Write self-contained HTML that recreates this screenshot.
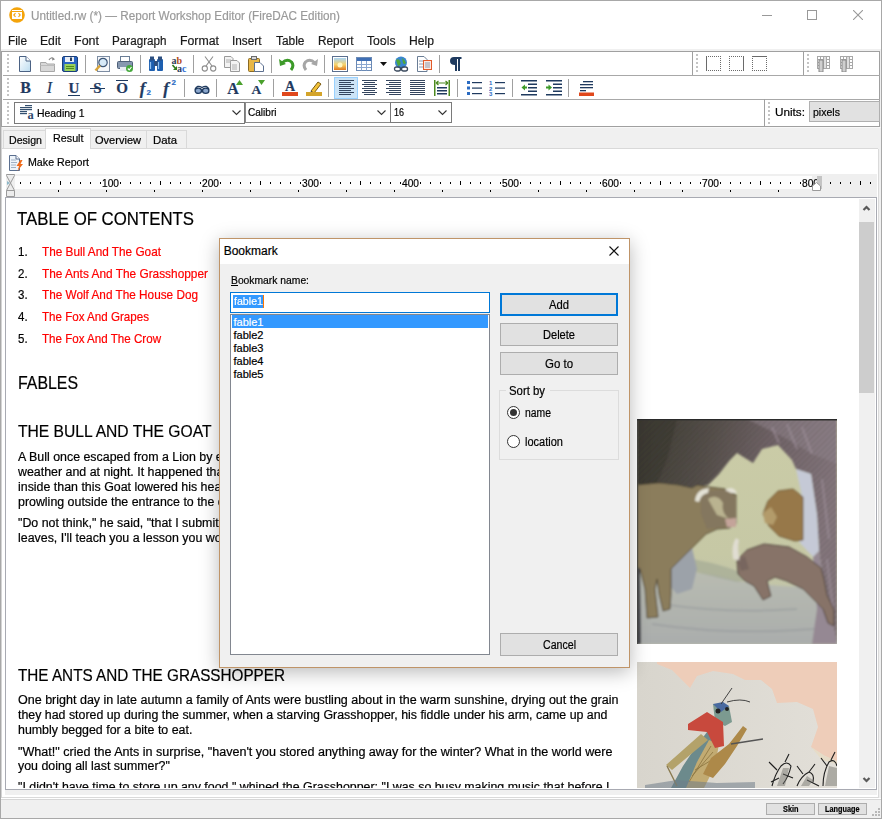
<!DOCTYPE html>
<html><head><meta charset="utf-8"><style>
html,body{margin:0;padding:0;width:882px;height:819px;overflow:hidden;background:#f0f0f0;}
body{position:relative;font-family:"Liberation Sans",sans-serif;}
div,span,svg{position:absolute;box-sizing:border-box;}
span{white-space:nowrap;-webkit-text-stroke:0.2px currentColor;}
</style></head><body>
<div style="left:0px;top:0px;width:882px;height:819px;background:#f0f0f0;"></div>
<div style="left:0px;top:0px;width:882px;height:51px;background:#fff;"></div>
<div style="left:0px;top:0px;width:882px;height:1px;background:#a8a8a8;"></div>
<div style="left:0px;top:0px;width:1px;height:819px;background:#a8a8a8;"></div>
<div style="left:881px;top:0px;width:1px;height:819px;background:#a8a8a8;"></div>
<svg style="left:9px;top:7px;" width="16" height="16" viewBox="0 0 16 16"><circle cx="8" cy="8" r="7.8" fill="#f4a40b"/><rect x="3" y="3" width="10" height="9" fill="#fff"/><rect x="3" y="4" width="10" height="1" fill="#f4a40b"/><path d="M6.5 6.2 L4.8 8 L6.5 9.8 M9.5 6.2 L11.2 8 L9.5 9.8" stroke="#f4a40b" stroke-width="1.1" fill="none"/></svg>
<span style="left:30.50px;top:9.84px;font-size:12px;line-height:12px;color:#9a9a9a;font-weight:normal;font-family:'Liberation Sans',sans-serif;transform:scaleX(0.9762);transform-origin:0 0;">Untitled.rw (*) — Report Workshop Editor (FireDAC Edition)</span>
<div style="left:762px;top:15px;width:10px;height:1px;background:#999;"></div>
<div style="left:807px;top:10px;width:10px;height:10px;border:1px solid #999;"></div>
<svg style="left:853px;top:10px;" width="10" height="10" viewBox="0 0 10 10"><path d="M0 0 L10 10 M10 0 L0 10" stroke="#999" stroke-width="1.1"/></svg>
<span style="left:8.00px;top:34.84px;font-size:12px;line-height:12px;color:#1a1a1a;font-weight:normal;font-family:'Liberation Sans',sans-serif;transform:scaleX(0.9822);transform-origin:0 0;">File</span>
<span style="left:39.50px;top:34.84px;font-size:12px;line-height:12px;color:#1a1a1a;font-weight:normal;font-family:'Liberation Sans',sans-serif;transform:scaleX(1.0151);transform-origin:0 0;">Edit</span>
<span style="left:73.50px;top:34.84px;font-size:12px;line-height:12px;color:#1a1a1a;font-weight:normal;font-family:'Liberation Sans',sans-serif;transform:scaleX(1.0410);transform-origin:0 0;">Font</span>
<span style="left:111.80px;top:34.84px;font-size:12px;line-height:12px;color:#1a1a1a;font-weight:normal;font-family:'Liberation Sans',sans-serif;transform:scaleX(0.9724);transform-origin:0 0;">Paragraph</span>
<span style="left:180.00px;top:34.84px;font-size:12px;line-height:12px;color:#1a1a1a;font-weight:normal;font-family:'Liberation Sans',sans-serif;transform:scaleX(1.0259);transform-origin:0 0;">Format</span>
<span style="left:232.00px;top:34.84px;font-size:12px;line-height:12px;color:#1a1a1a;font-weight:normal;font-family:'Liberation Sans',sans-serif;transform:scaleX(0.9828);transform-origin:0 0;">Insert</span>
<span style="left:275.50px;top:34.84px;font-size:12px;line-height:12px;color:#1a1a1a;font-weight:normal;font-family:'Liberation Sans',sans-serif;transform:scaleX(0.9935);transform-origin:0 0;">Table</span>
<span style="left:317.50px;top:34.84px;font-size:12px;line-height:12px;color:#1a1a1a;font-weight:normal;font-family:'Liberation Sans',sans-serif;transform:scaleX(0.9853);transform-origin:0 0;">Report</span>
<span style="left:367.00px;top:34.84px;font-size:12px;line-height:12px;color:#1a1a1a;font-weight:normal;font-family:'Liberation Sans',sans-serif;transform:scaleX(1.0173);transform-origin:0 0;">Tools</span>
<span style="left:408.50px;top:34.84px;font-size:12px;line-height:12px;color:#1a1a1a;font-weight:normal;font-family:'Liberation Sans',sans-serif;transform:scaleX(1.0127);transform-origin:0 0;">Help</span>
<div style="left:1px;top:49px;width:880px;height:2px;background:#f0f0f0;"></div>
<div style="left:1px;top:51px;width:879px;height:76px;background:#fff;border:1px solid #a0a0a0;"></div>
<div style="left:3px;top:75px;width:877px;height:1px;background:#a8a8a8;"></div>
<div style="left:3px;top:99px;width:877px;height:1px;background:#a8a8a8;"></div>
<svg style="left:7px;top:54px;" width="2" height="20" viewBox="0 0 2 20"><rect x="0" y="0" width="2" height="2" fill="#c4c4c4"/><rect x="0" y="4" width="2" height="2" fill="#c4c4c4"/><rect x="0" y="8" width="2" height="2" fill="#c4c4c4"/><rect x="0" y="12" width="2" height="2" fill="#c4c4c4"/><rect x="0" y="16" width="2" height="2" fill="#c4c4c4"/></svg>
<svg style="left:7px;top:78px;" width="2" height="20" viewBox="0 0 2 20"><rect x="0" y="0" width="2" height="2" fill="#c4c4c4"/><rect x="0" y="4" width="2" height="2" fill="#c4c4c4"/><rect x="0" y="8" width="2" height="2" fill="#c4c4c4"/><rect x="0" y="12" width="2" height="2" fill="#c4c4c4"/><rect x="0" y="16" width="2" height="2" fill="#c4c4c4"/></svg>
<svg style="left:7px;top:102px;" width="2" height="24" viewBox="0 0 2 24"><rect x="0" y="0" width="2" height="2" fill="#c4c4c4"/><rect x="0" y="4" width="2" height="2" fill="#c4c4c4"/><rect x="0" y="8" width="2" height="2" fill="#c4c4c4"/><rect x="0" y="12" width="2" height="2" fill="#c4c4c4"/><rect x="0" y="16" width="2" height="2" fill="#c4c4c4"/><rect x="0" y="20" width="2" height="2" fill="#c4c4c4"/></svg>
<svg style="left:696px;top:54px;" width="2" height="20" viewBox="0 0 2 20"><rect x="0" y="0" width="2" height="2" fill="#c4c4c4"/><rect x="0" y="4" width="2" height="2" fill="#c4c4c4"/><rect x="0" y="8" width="2" height="2" fill="#c4c4c4"/><rect x="0" y="12" width="2" height="2" fill="#c4c4c4"/><rect x="0" y="16" width="2" height="2" fill="#c4c4c4"/></svg>
<svg style="left:807px;top:54px;" width="2" height="20" viewBox="0 0 2 20"><rect x="0" y="0" width="2" height="2" fill="#c4c4c4"/><rect x="0" y="4" width="2" height="2" fill="#c4c4c4"/><rect x="0" y="8" width="2" height="2" fill="#c4c4c4"/><rect x="0" y="12" width="2" height="2" fill="#c4c4c4"/><rect x="0" y="16" width="2" height="2" fill="#c4c4c4"/></svg>
<svg style="left:768px;top:102px;" width="2" height="24" viewBox="0 0 2 24"><rect x="0" y="0" width="2" height="2" fill="#c4c4c4"/><rect x="0" y="4" width="2" height="2" fill="#c4c4c4"/><rect x="0" y="8" width="2" height="2" fill="#c4c4c4"/><rect x="0" y="12" width="2" height="2" fill="#c4c4c4"/><rect x="0" y="16" width="2" height="2" fill="#c4c4c4"/><rect x="0" y="20" width="2" height="2" fill="#c4c4c4"/></svg>
<div style="left:85px;top:55px;width:1px;height:18px;background:#a0a0a0;"></div>
<div style="left:140px;top:55px;width:1px;height:18px;background:#a0a0a0;"></div>
<div style="left:193px;top:55px;width:1px;height:18px;background:#a0a0a0;"></div>
<div style="left:271px;top:55px;width:1px;height:18px;background:#a0a0a0;"></div>
<div style="left:324px;top:55px;width:1px;height:18px;background:#a0a0a0;"></div>
<div style="left:439px;top:55px;width:1px;height:18px;background:#a0a0a0;"></div>
<div style="left:184px;top:79px;width:1px;height:18px;background:#a0a0a0;"></div>
<div style="left:216px;top:79px;width:1px;height:18px;background:#a0a0a0;"></div>
<div style="left:273px;top:79px;width:1px;height:18px;background:#a0a0a0;"></div>
<div style="left:328px;top:79px;width:1px;height:18px;background:#a0a0a0;"></div>
<div style="left:457px;top:79px;width:1px;height:18px;background:#a0a0a0;"></div>
<div style="left:512px;top:79px;width:1px;height:18px;background:#a0a0a0;"></div>
<div style="left:568px;top:79px;width:1px;height:18px;background:#a0a0a0;"></div>
<div style="left:692px;top:51px;width:1px;height:24px;background:#a0a0a0;"></div>
<div style="left:803px;top:51px;width:1px;height:24px;background:#a0a0a0;"></div>
<div style="left:764px;top:99px;width:1px;height:27px;background:#a0a0a0;"></div>
<svg style="left:17px;top:56px;" width="16" height="16" viewBox="0 0 16 16"><defs><linearGradient id="gnew" x1="0" y1="0" x2="1" y2="1"><stop offset="0" stop-color="#fff"/><stop offset="1" stop-color="#bcdcf0"/></linearGradient></defs><path d="M2.5 0.5 H9 L13.5 5 V15.5 H2.5 Z" fill="url(#gnew)" stroke="#4b6284"/><path d="M9 0.5 V5 H13.5" fill="#fff" stroke="#4b6284"/></svg>
<svg style="left:40px;top:56px;" width="16" height="16" viewBox="0 0 16 16"><path d="M0.5 6.5 H6 L7 8 H14.5 V15.5 H0.5 Z" fill="#d8d8d8" stroke="#a8a8a8"/><path d="M0.5 9.5 H14.5" stroke="#bcbcbc"/><path d="M9 4 Q11 0.5 14 3" stroke="#8a8a8a" fill="none" stroke-width="1.2"/><path d="M12.5 1.5 L15 3.5 L12 4.5Z" fill="#8a8a8a"/></svg>
<svg style="left:62px;top:56px;" width="16" height="16" viewBox="0 0 16 16"><rect x="0.5" y="0.5" width="15" height="15" rx="1.5" fill="#2a65c2" stroke="#1a3f7a"/><rect x="3" y="1" width="9" height="5" fill="#e9eef5"/><rect x="8" y="1.5" width="2" height="3.5" fill="#2a3f60"/><rect x="2.5" y="8" width="11" height="7" fill="#9ad15a"/><path d="M4 10.5 H12 M4 12.5 H12" stroke="#4e8a1e"/></svg>
<svg style="left:94px;top:56px;" width="16" height="16" viewBox="0 0 16 16"><rect x="3.5" y="0.5" width="12" height="15" fill="#f5f7fa" stroke="#7d8da3"/><circle cx="9" cy="6.5" r="4.2" fill="#d6e9f8" stroke="#3e5778" stroke-width="1.2"/><path d="M6 9.5 L1.5 14.5" stroke="#d8a43a" stroke-width="2.5"/></svg>
<svg style="left:117px;top:56px;" width="16" height="16" viewBox="0 0 16 16"><rect x="3.5" y="0.5" width="9" height="5" fill="#fff" stroke="#6a7d95"/><rect x="0.5" y="5.5" width="15" height="7" rx="1" fill="#8698b0" stroke="#4e6078"/><rect x="3" y="11" width="9" height="4" fill="#e8edf3"/><circle cx="12.5" cy="12.5" r="3.5" fill="#43a83a"/><path d="M10.8 12.5 L12.2 13.9 L14.5 11" stroke="#fff" stroke-width="1.1" fill="none"/></svg>
<svg style="left:148px;top:56px;" width="16" height="16" viewBox="0 0 16 16"><rect x="1" y="3" width="6" height="12" rx="1" fill="#1d5fb0"/><rect x="9" y="3" width="6" height="12" rx="1" fill="#1d5fb0"/><rect x="2" y="0.5" width="4" height="4" fill="#2c4f80"/><rect x="10" y="0.5" width="4" height="4" fill="#2c4f80"/><rect x="6" y="5" width="4" height="5" fill="#2c4f80"/><path d="M2.5 6 V13 M10.5 6 V13" stroke="#8fc0ef" stroke-width="1.2"/></svg>
<svg style="left:171px;top:56px;" width="16" height="16" viewBox="0 0 16 16"><text x="0.5" y="8" font-family="Liberation Serif" font-size="10" font-weight="bold" fill="#2e3d5c">a</text><text x="5.5" y="8" font-family="Liberation Serif" font-size="10" font-weight="bold" fill="#b24a1c">b</text><text x="6" y="15.5" font-family="Liberation Serif" font-size="10" font-weight="bold" fill="#2e3d5c">a</text><text x="11" y="15.5" font-family="Liberation Serif" font-size="10" font-weight="bold" fill="#2f6fd6">c</text><path d="M1.5 9 L5 13" stroke="#2f7a1a" stroke-width="1.6"/><path d="M6 10 V14 H2Z" fill="#2f7a1a"/></svg>
<svg style="left:201px;top:56px;" width="16" height="16" viewBox="0 0 16 16"><path d="M4 0.5 L11 10 M12 0.5 L5 10" stroke="#8d8d8d" stroke-width="1.1"/><circle cx="3.8" cy="12.5" r="2.6" fill="none" stroke="#8d8d8d" stroke-width="1.1"/><circle cx="12.2" cy="12.5" r="2.6" fill="none" stroke="#8d8d8d" stroke-width="1.1"/></svg>
<svg style="left:224px;top:56px;" width="16" height="16" viewBox="0 0 16 16"><path d="M0.5 0.5 H7 L9 2.5 V11.5 H0.5Z" fill="#f3f3f3" stroke="#9a9a9a"/><path d="M6.5 4.5 H13 L15.5 7 V15.5 H6.5Z" fill="#f3f3f3" stroke="#9a9a9a"/><path d="M2 4 H7 M2 6 H7 M8 9 H13 M8 11 H13 M8 13 H13" stroke="#b0b0b0"/></svg>
<svg style="left:248px;top:56px;" width="16" height="16" viewBox="0 0 16 16"><rect x="0.5" y="2.5" width="11" height="13" rx="1" fill="#e8b746" stroke="#8a6a24"/><rect x="3.5" y="0.5" width="5" height="3" fill="#d8d8d8" stroke="#6b6b6b"/><path d="M6.5 6.5 H12 L15.5 10 V15.5 H6.5Z" fill="#fff" stroke="#5b6f8f"/></svg>
<svg style="left:279px;top:56px;" width="16" height="16" viewBox="0 0 16 16"><path d="M3 7 Q8 2 12.5 6 Q15.5 9.5 12 14" stroke="#3c9a28" stroke-width="3" fill="none"/><path d="M0 3 L1 10 L7 8 Z" fill="#3c9a28"/></svg>
<svg style="left:302px;top:56px;" width="16" height="16" viewBox="0 0 16 16"><path d="M13 7 Q8 2 3.5 6 Q0.5 9.5 4 14" stroke="#a6a6a6" stroke-width="3" fill="none"/><path d="M16 3 L15 10 L9 8 Z" fill="#a6a6a6"/></svg>
<svg style="left:332px;top:56px;" width="16" height="16" viewBox="0 0 16 16"><defs><linearGradient id="gpic" x1="0" y1="0" x2="0" y2="1"><stop offset="0" stop-color="#a9d4f5"/><stop offset="0.55" stop-color="#f7d36a"/><stop offset="1" stop-color="#e07a20"/></linearGradient></defs><rect x="0.5" y="0.5" width="15" height="15" fill="#fff" stroke="#5a6f8f"/><rect x="2" y="2" width="12" height="12" fill="url(#gpic)"/><circle cx="8" cy="9" r="2.5" fill="#fff6c0"/></svg>
<svg style="left:356px;top:56px;" width="16" height="16" viewBox="0 0 16 16"><rect x="0.5" y="1.5" width="15" height="13" fill="#fff" stroke="#6b8ab5"/><rect x="1" y="2" width="14" height="3" fill="#3f6fb5"/><path d="M1 8.5 H15 M1 11.5 H15 M5.5 5 V14.5 M10.5 5 V14.5" stroke="#8aa6cf"/></svg>
<svg style="left:380px;top:62px;" width="7" height="4" viewBox="0 0 7 4"><path d="M0 0 H7 L3.5 4Z" fill="#111"/></svg>
<svg style="left:393px;top:56px;" width="16" height="16" viewBox="0 0 16 16"><circle cx="8" cy="6.5" r="6" fill="#3a86cf"/><path d="M3 4 Q6 2 7 5 Q9 9 5 10 M9 2 Q12 4 13 7 Q11 9 10 7" fill="#4fa83a"/><rect x="1.5" y="11" width="6" height="4" rx="2" fill="none" stroke="#3b4a5e" stroke-width="1.3"/><rect x="8.5" y="11" width="6" height="4" rx="2" fill="none" stroke="#3b4a5e" stroke-width="1.3"/></svg>
<svg style="left:417px;top:56px;" width="16" height="16" viewBox="0 0 16 16"><path d="M0.5 0.5 H7 L10 3.5 V15.5 H0.5Z" fill="#fff" stroke="#6a7d95"/><rect x="6.5" y="4.5" width="8" height="9" fill="#fde9e0" stroke="#e25a2a"/><path d="M2 5 H6 M2 8 H6 M2 11 H6 M8 7 H13 M8 9 H13 M8 11 H13" stroke="#8c9bb0"/></svg>
<svg style="left:448px;top:56px;" width="16" height="16" viewBox="0 0 16 16"><path d="M6 1 H13.5 V3 H12 V15 H10 V3 H9 V15 H7 V9 Q2 9 2 5 Q2 1 6 1Z" fill="#1f3a5f"/></svg>
<svg style="left:706px;top:56px;" width="15" height="15" viewBox="0 0 15 15"><rect x="0" y="0" width="1" height="1" fill="#6a6a6a"/><rect x="0" y="14" width="1" height="1" fill="#6a6a6a"/><rect x="0" y="0" width="1" height="1" fill="#6a6a6a"/><rect x="14" y="0" width="1" height="1" fill="#6a6a6a"/><rect x="2" y="0" width="1" height="1" fill="#6a6a6a"/><rect x="2" y="14" width="1" height="1" fill="#6a6a6a"/><rect x="0" y="2" width="1" height="1" fill="#6a6a6a"/><rect x="14" y="2" width="1" height="1" fill="#6a6a6a"/><rect x="4" y="0" width="1" height="1" fill="#6a6a6a"/><rect x="4" y="14" width="1" height="1" fill="#6a6a6a"/><rect x="0" y="4" width="1" height="1" fill="#6a6a6a"/><rect x="14" y="4" width="1" height="1" fill="#6a6a6a"/><rect x="6" y="0" width="1" height="1" fill="#6a6a6a"/><rect x="6" y="14" width="1" height="1" fill="#6a6a6a"/><rect x="0" y="6" width="1" height="1" fill="#6a6a6a"/><rect x="14" y="6" width="1" height="1" fill="#6a6a6a"/><rect x="8" y="0" width="1" height="1" fill="#6a6a6a"/><rect x="8" y="14" width="1" height="1" fill="#6a6a6a"/><rect x="0" y="8" width="1" height="1" fill="#6a6a6a"/><rect x="14" y="8" width="1" height="1" fill="#6a6a6a"/><rect x="10" y="0" width="1" height="1" fill="#6a6a6a"/><rect x="10" y="14" width="1" height="1" fill="#6a6a6a"/><rect x="0" y="10" width="1" height="1" fill="#6a6a6a"/><rect x="14" y="10" width="1" height="1" fill="#6a6a6a"/><rect x="12" y="0" width="1" height="1" fill="#6a6a6a"/><rect x="12" y="14" width="1" height="1" fill="#6a6a6a"/><rect x="0" y="12" width="1" height="1" fill="#6a6a6a"/><rect x="14" y="12" width="1" height="1" fill="#6a6a6a"/><rect x="14" y="0" width="1" height="1" fill="#6a6a6a"/><rect x="14" y="14" width="1" height="1" fill="#6a6a6a"/><rect x="0" y="14" width="1" height="1" fill="#6a6a6a"/><rect x="14" y="14" width="1" height="1" fill="#6a6a6a"/><rect x="0" y="0" width="1" height="15" fill="#6a6a6a"/></svg>
<svg style="left:729px;top:56px;" width="15" height="15" viewBox="0 0 15 15"><rect x="0" y="0" width="1" height="1" fill="#6a6a6a"/><rect x="0" y="14" width="1" height="1" fill="#6a6a6a"/><rect x="0" y="0" width="1" height="1" fill="#6a6a6a"/><rect x="14" y="0" width="1" height="1" fill="#6a6a6a"/><rect x="2" y="0" width="1" height="1" fill="#6a6a6a"/><rect x="2" y="14" width="1" height="1" fill="#6a6a6a"/><rect x="0" y="2" width="1" height="1" fill="#6a6a6a"/><rect x="14" y="2" width="1" height="1" fill="#6a6a6a"/><rect x="4" y="0" width="1" height="1" fill="#6a6a6a"/><rect x="4" y="14" width="1" height="1" fill="#6a6a6a"/><rect x="0" y="4" width="1" height="1" fill="#6a6a6a"/><rect x="14" y="4" width="1" height="1" fill="#6a6a6a"/><rect x="6" y="0" width="1" height="1" fill="#6a6a6a"/><rect x="6" y="14" width="1" height="1" fill="#6a6a6a"/><rect x="0" y="6" width="1" height="1" fill="#6a6a6a"/><rect x="14" y="6" width="1" height="1" fill="#6a6a6a"/><rect x="8" y="0" width="1" height="1" fill="#6a6a6a"/><rect x="8" y="14" width="1" height="1" fill="#6a6a6a"/><rect x="0" y="8" width="1" height="1" fill="#6a6a6a"/><rect x="14" y="8" width="1" height="1" fill="#6a6a6a"/><rect x="10" y="0" width="1" height="1" fill="#6a6a6a"/><rect x="10" y="14" width="1" height="1" fill="#6a6a6a"/><rect x="0" y="10" width="1" height="1" fill="#6a6a6a"/><rect x="14" y="10" width="1" height="1" fill="#6a6a6a"/><rect x="12" y="0" width="1" height="1" fill="#6a6a6a"/><rect x="12" y="14" width="1" height="1" fill="#6a6a6a"/><rect x="0" y="12" width="1" height="1" fill="#6a6a6a"/><rect x="14" y="12" width="1" height="1" fill="#6a6a6a"/><rect x="14" y="0" width="1" height="1" fill="#6a6a6a"/><rect x="14" y="14" width="1" height="1" fill="#6a6a6a"/><rect x="0" y="14" width="1" height="1" fill="#6a6a6a"/><rect x="14" y="14" width="1" height="1" fill="#6a6a6a"/><rect x="14" y="0" width="1" height="15" fill="#6a6a6a"/></svg>
<svg style="left:752px;top:56px;" width="15" height="15" viewBox="0 0 15 15"><rect x="0" y="0" width="1" height="1" fill="#6a6a6a"/><rect x="0" y="14" width="1" height="1" fill="#6a6a6a"/><rect x="0" y="0" width="1" height="1" fill="#6a6a6a"/><rect x="14" y="0" width="1" height="1" fill="#6a6a6a"/><rect x="2" y="0" width="1" height="1" fill="#6a6a6a"/><rect x="2" y="14" width="1" height="1" fill="#6a6a6a"/><rect x="0" y="2" width="1" height="1" fill="#6a6a6a"/><rect x="14" y="2" width="1" height="1" fill="#6a6a6a"/><rect x="4" y="0" width="1" height="1" fill="#6a6a6a"/><rect x="4" y="14" width="1" height="1" fill="#6a6a6a"/><rect x="0" y="4" width="1" height="1" fill="#6a6a6a"/><rect x="14" y="4" width="1" height="1" fill="#6a6a6a"/><rect x="6" y="0" width="1" height="1" fill="#6a6a6a"/><rect x="6" y="14" width="1" height="1" fill="#6a6a6a"/><rect x="0" y="6" width="1" height="1" fill="#6a6a6a"/><rect x="14" y="6" width="1" height="1" fill="#6a6a6a"/><rect x="8" y="0" width="1" height="1" fill="#6a6a6a"/><rect x="8" y="14" width="1" height="1" fill="#6a6a6a"/><rect x="0" y="8" width="1" height="1" fill="#6a6a6a"/><rect x="14" y="8" width="1" height="1" fill="#6a6a6a"/><rect x="10" y="0" width="1" height="1" fill="#6a6a6a"/><rect x="10" y="14" width="1" height="1" fill="#6a6a6a"/><rect x="0" y="10" width="1" height="1" fill="#6a6a6a"/><rect x="14" y="10" width="1" height="1" fill="#6a6a6a"/><rect x="12" y="0" width="1" height="1" fill="#6a6a6a"/><rect x="12" y="14" width="1" height="1" fill="#6a6a6a"/><rect x="0" y="12" width="1" height="1" fill="#6a6a6a"/><rect x="14" y="12" width="1" height="1" fill="#6a6a6a"/><rect x="14" y="0" width="1" height="1" fill="#6a6a6a"/><rect x="14" y="14" width="1" height="1" fill="#6a6a6a"/><rect x="0" y="14" width="1" height="1" fill="#6a6a6a"/><rect x="14" y="14" width="1" height="1" fill="#6a6a6a"/><rect x="0" y="0" width="15" height="1" fill="#6a6a6a"/></svg>
<svg style="left:817px;top:56px;" width="13" height="16" viewBox="0 0 13 16"><rect x="0" y="0" width="13" height="13" fill="#a8a8a8"/><rect x="1" y="1" width="2" height="2" fill="#fff"/><rect x="1" y="4" width="2" height="2" fill="#fff"/><rect x="1" y="7" width="2" height="2" fill="#fff"/><rect x="1" y="10" width="2" height="2" fill="#fff"/><rect x="4" y="1" width="2" height="2" fill="#fff"/><rect x="4" y="4" width="2" height="2" fill="#fff"/><rect x="4" y="7" width="2" height="2" fill="#fff"/><rect x="4" y="10" width="2" height="2" fill="#fff"/><rect x="10" y="1" width="2" height="2" fill="#fff"/><rect x="10" y="4" width="2" height="2" fill="#fff"/><rect x="10" y="7" width="2" height="2" fill="#fff"/><rect x="10" y="10" width="2" height="2" fill="#fff"/><rect x="7" y="1" width="2" height="11" fill="#dedede"/><rect x="2" y="4" width="4" height="12" fill="#cfcfcf" stroke="#8a8a8a" stroke-width="1"/></svg>
<svg style="left:840px;top:56px;" width="13" height="16" viewBox="0 0 13 16"><rect x="0" y="0" width="13" height="13" fill="#a8a8a8"/><rect x="1" y="1" width="2" height="2" fill="#fff"/><rect x="1" y="4" width="2" height="2" fill="#fff"/><rect x="1" y="7" width="2" height="2" fill="#fff"/><rect x="1" y="10" width="2" height="2" fill="#fff"/><rect x="4" y="1" width="2" height="2" fill="#fff"/><rect x="4" y="4" width="2" height="2" fill="#fff"/><rect x="4" y="7" width="2" height="2" fill="#fff"/><rect x="4" y="10" width="2" height="2" fill="#fff"/><rect x="10" y="1" width="2" height="2" fill="#fff"/><rect x="10" y="4" width="2" height="2" fill="#fff"/><rect x="10" y="7" width="2" height="2" fill="#fff"/><rect x="10" y="10" width="2" height="2" fill="#fff"/><rect x="7" y="1" width="2" height="11" fill="#dedede"/><rect x="2" y="4" width="4" height="12" fill="#cfcfcf" stroke="#8a8a8a" stroke-width="1"/></svg>
<span style="left:20.16px;top:80.22px;font-size:16px;line-height:16px;color:#1f3a5f;font-weight:bold;font-family:'Liberation Serif',sans-serif;font-style:normal;">B</span>
<span style="left:46.84px;top:80.22px;font-size:16px;line-height:16px;color:#1f3a5f;font-weight:normal;font-family:'Liberation Serif',sans-serif;font-style:italic;">I</span>
<span style="left:68.58px;top:80.70px;font-size:15px;line-height:15px;color:#1f3a5f;font-weight:bold;font-family:'Liberation Serif',sans-serif;font-style:normal;">U</span>
<div style="left:68px;top:95px;width:12px;height:1px;background:#1f3a5f;"></div>
<span style="left:93.33px;top:80.70px;font-size:15px;line-height:15px;color:#1f3a5f;font-weight:bold;font-family:'Liberation Serif',sans-serif;font-style:normal;">S</span>
<div style="left:90px;top:88px;width:15px;height:1px;background:#1f3a5f;"></div>
<span style="left:116.16px;top:81.20px;font-size:15px;line-height:15px;color:#1f3a5f;font-weight:bold;font-family:'Liberation Serif',sans-serif;font-style:normal;">O</span>
<div style="left:116px;top:80px;width:12px;height:1px;background:#1f3a5f;"></div>
<span style="left:139.66px;top:79.73px;font-size:17px;line-height:17px;color:#1f3a5f;font-weight:bold;font-family:'Liberation Serif',sans-serif;font-style:italic;">f</span>
<span style="left:146.50px;top:88.73px;font-size:8px;line-height:8px;color:#2a6bc2;font-weight:bold;font-family:'Liberation Sans',sans-serif;">2</span>
<span style="left:163.16px;top:79.73px;font-size:17px;line-height:17px;color:#1f3a5f;font-weight:bold;font-family:'Liberation Serif',sans-serif;font-style:italic;">f</span>
<span style="left:171.50px;top:79.23px;font-size:8px;line-height:8px;color:#2a6bc2;font-weight:bold;font-family:'Liberation Sans',sans-serif;">2</span>
<svg style="left:194px;top:80px;" width="16" height="16" viewBox="0 0 16 16"><path d="M1 9.5 Q3 4.5 8 7.5 Q13 4.5 15 9.5" stroke="#1f3a5f" stroke-width="1.4" fill="none"/><ellipse cx="4.3" cy="10.8" rx="3.2" ry="2.6" fill="#8aa6cc" stroke="#1f3a5f" stroke-width="1.3"/><ellipse cx="11.7" cy="10.8" rx="3.2" ry="2.6" fill="#8aa6cc" stroke="#1f3a5f" stroke-width="1.3"/></svg>
<span style="left:227.22px;top:81.22px;font-size:16px;line-height:16px;color:#1f3a5f;font-weight:bold;font-family:'Liberation Serif',sans-serif;font-style:normal;">A</span>
<svg style="left:236px;top:80px;" width="7" height="5" viewBox="0 0 7 5"><path d="M0 5 L3.5 0 L7 5Z" fill="#4aa02c"/></svg>
<span style="left:251.62px;top:83.43px;font-size:13.5px;line-height:13.5px;color:#1f3a5f;font-weight:bold;font-family:'Liberation Serif',sans-serif;font-style:normal;">A</span>
<svg style="left:258px;top:80px;" width="7" height="5" viewBox="0 0 7 5"><path d="M0 0 L7 0 L3.5 5Z" fill="#4aa02c"/></svg>
<span style="left:284.94px;top:79.69px;font-size:14px;line-height:14px;color:#1f3a5f;font-weight:bold;font-family:'Liberation Serif',sans-serif;font-style:normal;">A</span>
<div style="left:282px;top:92px;width:16px;height:4px;background:#e0481c;"></div>
<svg style="left:306px;top:80px;" width="16" height="16" viewBox="0 0 16 16"><path d="M5 11 L12 2 L15 4 L8 13Z" fill="#f2c23a" stroke="#7a5a10"/><path d="M5 11 L4 13 L7 13Z" fill="#333"/><rect x="0" y="12" width="16" height="4" fill="#d4a42a"/></svg>
<div style="left:334px;top:77px;width:24px;height:22px;background:#cce4f7;border:1px solid #99d1ff;"></div>
<svg style="left:339px;top:80px;" width="16" height="15" viewBox="0 0 16 15"><rect x="0" y="0" width="15" height="1" fill="#34455e"/><rect x="0" y="2" width="12" height="1" fill="#34455e"/><rect x="0" y="4" width="15" height="1" fill="#34455e"/><rect x="0" y="6" width="12" height="1" fill="#34455e"/><rect x="0" y="8" width="15" height="1" fill="#34455e"/><rect x="0" y="10" width="12" height="1" fill="#34455e"/><rect x="0" y="12" width="15" height="1" fill="#34455e"/><rect x="0" y="14" width="12" height="1" fill="#34455e"/></svg>
<svg style="left:362px;top:80px;" width="16" height="15" viewBox="0 0 16 15"><rect x="0" y="0" width="15" height="1" fill="#34455e"/><rect x="2" y="2" width="11" height="1" fill="#34455e"/><rect x="0" y="4" width="15" height="1" fill="#34455e"/><rect x="2" y="6" width="11" height="1" fill="#34455e"/><rect x="0" y="8" width="15" height="1" fill="#34455e"/><rect x="2" y="10" width="11" height="1" fill="#34455e"/><rect x="0" y="12" width="15" height="1" fill="#34455e"/><rect x="2" y="14" width="11" height="1" fill="#34455e"/></svg>
<svg style="left:386px;top:80px;" width="16" height="15" viewBox="0 0 16 15"><rect x="0" y="0" width="15" height="1" fill="#34455e"/><rect x="3" y="2" width="12" height="1" fill="#34455e"/><rect x="0" y="4" width="15" height="1" fill="#34455e"/><rect x="3" y="6" width="12" height="1" fill="#34455e"/><rect x="0" y="8" width="15" height="1" fill="#34455e"/><rect x="3" y="10" width="12" height="1" fill="#34455e"/><rect x="0" y="12" width="15" height="1" fill="#34455e"/><rect x="3" y="14" width="12" height="1" fill="#34455e"/></svg>
<svg style="left:410px;top:80px;" width="16" height="15" viewBox="0 0 16 15"><rect x="0" y="0" width="15" height="1" fill="#34455e"/><rect x="0" y="2" width="15" height="1" fill="#34455e"/><rect x="0" y="4" width="15" height="1" fill="#34455e"/><rect x="0" y="6" width="15" height="1" fill="#34455e"/><rect x="0" y="8" width="15" height="1" fill="#34455e"/><rect x="0" y="10" width="15" height="1" fill="#34455e"/><rect x="0" y="12" width="15" height="1" fill="#34455e"/><rect x="0" y="14" width="15" height="1" fill="#34455e"/></svg>
<svg style="left:434px;top:80px;" width="16" height="16" viewBox="0 0 16 16"><rect x="0" y="0" width="1.5" height="16" fill="#4b8a1e"/><rect x="14.5" y="0" width="1.5" height="16" fill="#4b8a1e"/><path d="M2 3 H14 M2 3 L4.5 1 M2 3 L4.5 5 M14 3 L11.5 1 M14 3 L11.5 5" stroke="#4b8a1e" stroke-width="1.2" fill="none"/><rect x="3" y="7" width="10" height="1.5" fill="#1f3a5f"/><rect x="3" y="10" width="10" height="1.5" fill="#1f3a5f"/><rect x="3" y="13" width="10" height="1.5" fill="#1f3a5f"/></svg>
<svg style="left:466px;top:80px;" width="16" height="16" viewBox="0 0 16 16"><rect x="1" y="1" width="3" height="3" fill="#2a6bc2"/><rect x="1" y="6.5" width="3" height="3" fill="#2a6bc2"/><rect x="1" y="12" width="3" height="3" fill="#2a6bc2"/><rect x="6" y="2" width="10" height="1.2" fill="#1f3a5f"/><rect x="6" y="7.5" width="10" height="1.2" fill="#1f3a5f"/><rect x="6" y="13" width="10" height="1.2" fill="#1f3a5f"/></svg>
<svg style="left:489px;top:80px;" width="16" height="16" viewBox="0 0 16 16"><text x="0" y="5" font-size="6" font-family="Liberation Sans" font-weight="bold" fill="#2a6bc2">1</text><text x="0" y="10.5" font-size="6" font-family="Liberation Sans" font-weight="bold" fill="#2a6bc2">2</text><text x="0" y="16" font-size="6" font-family="Liberation Sans" font-weight="bold" fill="#2a6bc2">3</text><rect x="6" y="2" width="10" height="1.2" fill="#1f3a5f"/><rect x="6" y="7.5" width="10" height="1.2" fill="#1f3a5f"/><rect x="6" y="13" width="10" height="1.2" fill="#1f3a5f"/></svg>
<svg style="left:521px;top:80px;" width="16" height="16" viewBox="0 0 16 16"><rect x="0" y="0" width="16" height="1.5" fill="#1f3a5f"/><rect x="7" y="3.5" width="9" height="1.5" fill="#1f3a5f"/><rect x="7" y="7" width="9" height="1.5" fill="#1f3a5f"/><rect x="7" y="10.5" width="9" height="1.5" fill="#1f3a5f"/><rect x="0" y="14" width="16" height="1.5" fill="#1f3a5f"/><path d="M0.5 7.5 L4 4.5 V10.5Z" fill="#3c9a28"/><rect x="3" y="6.5" width="3" height="2" fill="#3c9a28"/></svg>
<svg style="left:546px;top:80px;" width="16" height="16" viewBox="0 0 16 16"><rect x="0" y="0" width="16" height="1.5" fill="#1f3a5f"/><rect x="7" y="3.5" width="9" height="1.5" fill="#1f3a5f"/><rect x="7" y="7" width="9" height="1.5" fill="#1f3a5f"/><rect x="7" y="10.5" width="9" height="1.5" fill="#1f3a5f"/><rect x="0" y="14" width="16" height="1.5" fill="#1f3a5f"/><path d="M6 7.5 L2.5 4.5 V10.5Z" fill="#3c9a28"/><rect x="0" y="6.5" width="3" height="2" fill="#3c9a28"/></svg>
<svg style="left:578px;top:80px;" width="16" height="16" viewBox="0 0 16 16"><rect x="5" y="1" width="10" height="1.3" fill="#1f3a5f"/><rect x="2" y="4" width="13" height="1.3" fill="#1f3a5f"/><rect x="2" y="7" width="13" height="1.3" fill="#1f3a5f"/><rect x="2" y="10" width="6" height="1.3" fill="#1f3a5f"/><rect x="1" y="12.5" width="15" height="3.5" fill="#e0481c"/></svg>
<div style="left:14px;top:102px;width:231px;height:22px;background:#fff;border:1px solid #7a7a7a;"></div>
<svg style="left:20px;top:105px;" width="16" height="15" viewBox="0 0 16 15"><rect x="5" y="0" width="7" height="1.2" fill="#34506f"/><rect x="0" y="2" width="12" height="1.2" fill="#34506f"/><rect x="0" y="4" width="12" height="1.2" fill="#34506f"/><rect x="0" y="6" width="7" height="1.2" fill="#34506f"/><rect x="0" y="8" width="7" height="1.2" fill="#34506f"/><text x="7.5" y="13.6" font-family="Liberation Serif" font-weight="bold" font-size="12.5" fill="#2e4a6e">a</text></svg>
<span style="left:37.00px;top:107.69px;font-size:11px;line-height:11px;color:#000;font-weight:normal;font-family:'Liberation Sans',sans-serif;transform:scaleX(0.9470);transform-origin:0 0;">Heading 1</span>
<svg style="left:232px;top:110px;" width="9" height="6" viewBox="0 0 9 6"><path d="M0.5 0.5 L4.5 4.5 L8.5 0.5" stroke="#333" stroke-width="1.1" fill="none"/></svg>
<div style="left:245px;top:102px;width:146px;height:21px;background:#fff;border:1px solid #8a8a8a;"></div>
<span style="left:247.80px;top:106.99px;font-size:11px;line-height:11px;color:#000;font-weight:normal;font-family:'Liberation Sans',sans-serif;transform:scaleX(0.9138);transform-origin:0 0;">Calibri</span>
<svg style="left:377px;top:110px;" width="9" height="6" viewBox="0 0 9 6"><path d="M0.5 0.5 L4.5 4.5 L8.5 0.5" stroke="#333" stroke-width="1.1" fill="none"/></svg>
<div style="left:390px;top:102px;width:62px;height:21px;background:#fff;border:1px solid #7a7a7a;"></div>
<span style="left:394.00px;top:106.99px;font-size:11px;line-height:11px;color:#000;font-weight:normal;font-family:'Liberation Sans',sans-serif;transform:scaleX(0.8163);transform-origin:0 0;">16</span>
<svg style="left:438px;top:110px;" width="9" height="6" viewBox="0 0 9 6"><path d="M0.5 0.5 L4.5 4.5 L8.5 0.5" stroke="#333" stroke-width="1.1" fill="none"/></svg>
<span style="left:775.00px;top:106.77px;font-size:11.5px;line-height:11.5px;color:#000;font-weight:normal;font-family:'Liberation Sans',sans-serif;transform:scaleX(1.0202);transform-origin:0 0;">Units:</span>
<div style="left:809px;top:101px;width:71px;height:21px;background:#e1e1e1;border:1px solid #b0b0b0;"></div>
<span style="left:812.50px;top:106.77px;font-size:11.5px;line-height:11.5px;color:#000;font-weight:normal;font-family:'Liberation Sans',sans-serif;transform:scaleX(0.9182);transform-origin:0 0;">pixels</span>
<div style="left:1px;top:127px;width:880px;height:1px;background:#f8f8f8;"></div>
<div style="left:2px;top:148px;width:876px;height:1px;background:#d9d9d9;"></div>
<div style="left:3px;top:130px;width:43px;height:19px;background:#f0f0f0;border:1px solid #d9d9d9;"></div>
<div style="left:90px;top:130px;width:57px;height:19px;background:#f0f0f0;border:1px solid #d9d9d9;"></div>
<div style="left:146px;top:130px;width:41px;height:19px;background:#f0f0f0;border:1px solid #d9d9d9;"></div>
<div style="left:45px;top:128px;width:46px;height:21px;background:#fff;border:1px solid #d9d9d9;border-bottom:none;"></div>
<span style="left:8.50px;top:134.69px;font-size:11px;line-height:11px;color:#000;font-weight:normal;font-family:'Liberation Sans',sans-serif;transform:scaleX(0.9635);transform-origin:0 0;">Design</span>
<span style="left:52.70px;top:132.69px;font-size:11px;line-height:11px;color:#000;font-weight:normal;font-family:'Liberation Sans',sans-serif;transform:scaleX(0.9780);transform-origin:0 0;">Result</span>
<span style="left:94.80px;top:134.69px;font-size:11px;line-height:11px;color:#000;font-weight:normal;font-family:'Liberation Sans',sans-serif;transform:scaleX(1.0034);transform-origin:0 0;">Overview</span>
<span style="left:152.70px;top:134.69px;font-size:11px;line-height:11px;color:#000;font-weight:normal;font-family:'Liberation Sans',sans-serif;transform:scaleX(1.0323);transform-origin:0 0;">Data</span>
<div style="left:2px;top:149px;width:876px;height:647px;background:#fff;"></div>
<div style="left:1px;top:127px;width:1px;height:691px;background:#d4d4d4;"></div>
<svg style="left:8px;top:155px;" width="16" height="16" viewBox="0 0 16 16"><path d="M1.5 0.5 H8 L11.5 4 V15.5 H1.5Z" fill="#eef4fa" stroke="#5b6f8f"/><path d="M8 0.5 V4 H11.5" fill="#fff" stroke="#5b6f8f"/><path d="M3 5 H8 M3 7.5 H9 M3 10 H8 M3 12.5 H8" stroke="#9fb0c5"/><path d="M12.5 5 L8.5 11 H11 L9.5 16 L15 9 H12.5 L14.5 5Z" fill="#ef6a1a"/></svg>
<span style="left:27.80px;top:157.07px;font-size:11.5px;line-height:11.5px;color:#000;font-weight:normal;font-family:'Liberation Sans',sans-serif;transform:scaleX(0.9264);transform-origin:0 0;">Make Report</span>
<div style="left:6px;top:174px;width:871px;height:23px;background:#efefef;"></div>
<div style="left:15px;top:176px;width:797px;height:13px;background:#fdfdfd;"></div>
<svg style="left:6px;top:174px;" width="871" height="23" viewBox="0 0 871 23"><rect x="14" y="8" width="1" height="2" fill="#000"/><rect x="24" y="8" width="1" height="2" fill="#000"/><rect x="34" y="8" width="1" height="2" fill="#000"/><rect x="44" y="8" width="1" height="2" fill="#000"/><rect x="54" y="7" width="1" height="4" fill="#000"/><rect x="64" y="8" width="1" height="2" fill="#000"/><rect x="74" y="8" width="1" height="2" fill="#000"/><rect x="84" y="8" width="1" height="2" fill="#000"/><rect x="94" y="8" width="1" height="2" fill="#000"/><rect x="114" y="8" width="1" height="2" fill="#000"/><rect x="124" y="8" width="1" height="2" fill="#000"/><rect x="134" y="8" width="1" height="2" fill="#000"/><rect x="144" y="8" width="1" height="2" fill="#000"/><rect x="154" y="7" width="1" height="4" fill="#000"/><rect x="164" y="8" width="1" height="2" fill="#000"/><rect x="174" y="8" width="1" height="2" fill="#000"/><rect x="184" y="8" width="1" height="2" fill="#000"/><rect x="194" y="8" width="1" height="2" fill="#000"/><rect x="214" y="8" width="1" height="2" fill="#000"/><rect x="224" y="8" width="1" height="2" fill="#000"/><rect x="234" y="8" width="1" height="2" fill="#000"/><rect x="244" y="8" width="1" height="2" fill="#000"/><rect x="254" y="7" width="1" height="4" fill="#000"/><rect x="264" y="8" width="1" height="2" fill="#000"/><rect x="274" y="8" width="1" height="2" fill="#000"/><rect x="284" y="8" width="1" height="2" fill="#000"/><rect x="294" y="8" width="1" height="2" fill="#000"/><rect x="314" y="8" width="1" height="2" fill="#000"/><rect x="324" y="8" width="1" height="2" fill="#000"/><rect x="334" y="8" width="1" height="2" fill="#000"/><rect x="344" y="8" width="1" height="2" fill="#000"/><rect x="354" y="7" width="1" height="4" fill="#000"/><rect x="364" y="8" width="1" height="2" fill="#000"/><rect x="374" y="8" width="1" height="2" fill="#000"/><rect x="384" y="8" width="1" height="2" fill="#000"/><rect x="394" y="8" width="1" height="2" fill="#000"/><rect x="414" y="8" width="1" height="2" fill="#000"/><rect x="424" y="8" width="1" height="2" fill="#000"/><rect x="434" y="8" width="1" height="2" fill="#000"/><rect x="444" y="8" width="1" height="2" fill="#000"/><rect x="454" y="7" width="1" height="4" fill="#000"/><rect x="464" y="8" width="1" height="2" fill="#000"/><rect x="474" y="8" width="1" height="2" fill="#000"/><rect x="484" y="8" width="1" height="2" fill="#000"/><rect x="494" y="8" width="1" height="2" fill="#000"/><rect x="514" y="8" width="1" height="2" fill="#000"/><rect x="524" y="8" width="1" height="2" fill="#000"/><rect x="534" y="8" width="1" height="2" fill="#000"/><rect x="544" y="8" width="1" height="2" fill="#000"/><rect x="554" y="7" width="1" height="4" fill="#000"/><rect x="564" y="8" width="1" height="2" fill="#000"/><rect x="574" y="8" width="1" height="2" fill="#000"/><rect x="584" y="8" width="1" height="2" fill="#000"/><rect x="594" y="8" width="1" height="2" fill="#000"/><rect x="614" y="8" width="1" height="2" fill="#000"/><rect x="624" y="8" width="1" height="2" fill="#000"/><rect x="634" y="8" width="1" height="2" fill="#000"/><rect x="644" y="8" width="1" height="2" fill="#000"/><rect x="654" y="7" width="1" height="4" fill="#000"/><rect x="664" y="8" width="1" height="2" fill="#000"/><rect x="674" y="8" width="1" height="2" fill="#000"/><rect x="684" y="8" width="1" height="2" fill="#000"/><rect x="694" y="8" width="1" height="2" fill="#000"/><rect x="714" y="8" width="1" height="2" fill="#000"/><rect x="724" y="8" width="1" height="2" fill="#000"/><rect x="734" y="8" width="1" height="2" fill="#000"/><rect x="744" y="8" width="1" height="2" fill="#000"/><rect x="754" y="7" width="1" height="4" fill="#000"/><rect x="764" y="8" width="1" height="2" fill="#000"/><rect x="774" y="8" width="1" height="2" fill="#000"/><rect x="784" y="8" width="1" height="2" fill="#000"/><rect x="794" y="8" width="1" height="2" fill="#000"/><rect x="814" y="8" width="1" height="2" fill="#000"/><rect x="824" y="8" width="1" height="2" fill="#000"/><rect x="834" y="8" width="1" height="2" fill="#000"/><rect x="844" y="8" width="1" height="2" fill="#000"/><rect x="854" y="7" width="1" height="4" fill="#000"/><rect x="864" y="8" width="1" height="2" fill="#000"/><rect x="52" y="16" width="1" height="2" fill="#000"/><rect x="100" y="16" width="1" height="2" fill="#000"/><rect x="148" y="16" width="1" height="2" fill="#000"/><rect x="196" y="16" width="1" height="2" fill="#000"/><rect x="244" y="16" width="1" height="2" fill="#000"/><rect x="292" y="16" width="1" height="2" fill="#000"/><rect x="340" y="16" width="1" height="2" fill="#000"/><rect x="388" y="16" width="1" height="2" fill="#000"/><rect x="436" y="16" width="1" height="2" fill="#000"/><rect x="484" y="16" width="1" height="2" fill="#000"/><rect x="532" y="16" width="1" height="2" fill="#000"/><rect x="580" y="16" width="1" height="2" fill="#000"/><rect x="628" y="16" width="1" height="2" fill="#000"/><rect x="676" y="16" width="1" height="2" fill="#000"/><rect x="724" y="16" width="1" height="2" fill="#000"/><rect x="772" y="16" width="1" height="2" fill="#000"/></svg>
<span style="left:101.50px;top:177.69px;font-size:11px;line-height:11px;color:#000;font-weight:normal;font-family:'Liberation Sans',sans-serif;transform:scaleX(0.9260);transform-origin:0 0;">100</span>
<span style="left:201.50px;top:177.69px;font-size:11px;line-height:11px;color:#000;font-weight:normal;font-family:'Liberation Sans',sans-serif;transform:scaleX(0.9260);transform-origin:0 0;">200</span>
<span style="left:301.50px;top:177.69px;font-size:11px;line-height:11px;color:#000;font-weight:normal;font-family:'Liberation Sans',sans-serif;transform:scaleX(0.9260);transform-origin:0 0;">300</span>
<span style="left:401.50px;top:177.69px;font-size:11px;line-height:11px;color:#000;font-weight:normal;font-family:'Liberation Sans',sans-serif;transform:scaleX(0.9260);transform-origin:0 0;">400</span>
<span style="left:501.50px;top:177.69px;font-size:11px;line-height:11px;color:#000;font-weight:normal;font-family:'Liberation Sans',sans-serif;transform:scaleX(0.9260);transform-origin:0 0;">500</span>
<span style="left:601.50px;top:177.69px;font-size:11px;line-height:11px;color:#000;font-weight:normal;font-family:'Liberation Sans',sans-serif;transform:scaleX(0.9260);transform-origin:0 0;">600</span>
<span style="left:701.50px;top:177.69px;font-size:11px;line-height:11px;color:#000;font-weight:normal;font-family:'Liberation Sans',sans-serif;transform:scaleX(0.9260);transform-origin:0 0;">700</span>
<span style="left:801.50px;top:177.69px;font-size:11px;line-height:11px;color:#000;font-weight:normal;font-family:'Liberation Sans',sans-serif;transform:scaleX(0.9260);transform-origin:0 0;">800</span>
<svg style="left:6px;top:174px;" width="9" height="23" viewBox="0 0 9 23"><path d="M0.5 0.5 H8.5 V1.5 L4.5 9 L8.5 16.5 V22.5 H0.5 V16.5 L4.5 9 L0.5 1.5Z" fill="#ececec" stroke="#9a9a9a"/><path d="M0.5 16.5 H8.5" stroke="#9a9a9a"/><path d="M1 7 L4 9 L1 11Z" fill="#8fb8c8"/></svg>
<div style="left:817px;top:176px;width:5px;height:13px;background:#c4c4c4;"></div>
<svg style="left:812px;top:182px;" width="10" height="10" viewBox="0 0 10 10"><path d="M0.5 8.5 V4 L4.5 0.5 L8.5 4 V8.5Z" fill="#fff" stroke="#9a9a9a"/></svg>
<div style="left:5px;top:197px;width:872px;height:593px;background:#fff;border:1px solid #a8aab2;"></div>
<div style="left:859px;top:199px;width:16px;height:589px;background:#f0f0f0;"></div>
<div style="left:859px;top:222px;width:15px;height:171px;background:#cdcdcd;"></div>
<svg style="left:862px;top:204px;" width="9" height="8" viewBox="0 0 9 8"><path d="M1.5 6 L4.5 3 L7.5 6" stroke="#5a5a5a" stroke-width="2.2" fill="none"/></svg>
<svg style="left:862px;top:776px;" width="9" height="8" viewBox="0 0 9 8"><path d="M1.5 2 L4.5 5 L7.5 2" stroke="#5a5a5a" stroke-width="2.2" fill="none"/></svg>
<div style="left:2px;top:796px;width:877px;height:1px;background:#ffffff;"></div>
<div style="left:2px;top:797px;width:877px;height:1px;background:#dadada;"></div>
<div style="left:878px;top:149px;width:1px;height:649px;background:#dadada;"></div>
<div style="left:1px;top:798px;width:880px;height:1px;background:#ffffff;"></div>
<div style="left:1px;top:799px;width:880px;height:1px;background:#d6d6d6;"></div>
<div style="left:1px;top:800px;width:880px;height:18px;background:#f0f0f0;"></div>
<div style="left:0px;top:818px;width:882px;height:1px;background:#a8a8a8;"></div>
<div style="left:766px;top:803px;width:49px;height:12px;background:#e1e1e1;border:1px solid #adadad;"></div>
<div style="left:818px;top:803px;width:49px;height:12px;background:#e1e1e1;border:1px solid #adadad;"></div>
<span style="left:783.25px;top:804.80px;font-size:8.5px;line-height:8.5px;color:#000;font-weight:bold;font-family:'Liberation Sans',sans-serif;transform:scaleX(0.8634);transform-origin:0 0;">Skin</span>
<span style="left:825.25px;top:804.80px;font-size:8.5px;line-height:8.5px;color:#000;font-weight:bold;font-family:'Liberation Sans',sans-serif;transform:scaleX(0.8591);transform-origin:0 0;">Language</span>
<svg style="left:871px;top:807px;" width="10" height="10" viewBox="0 0 10 10"><rect x="7" y="1" width="2" height="2" fill="#b8b8b8"/><rect x="4" y="4" width="2" height="2" fill="#b8b8b8"/><rect x="7" y="4" width="2" height="2" fill="#b8b8b8"/><rect x="1" y="7" width="2" height="2" fill="#b8b8b8"/><rect x="4" y="7" width="2" height="2" fill="#b8b8b8"/><rect x="7" y="7" width="2" height="2" fill="#b8b8b8"/></svg>
<span style="left:17.00px;top:210.06px;font-size:18px;line-height:18px;color:#000;font-weight:normal;font-family:'Liberation Sans',sans-serif;transform:scaleX(0.9331);transform-origin:0 0;">TABLE OF CONTENTS</span>
<span style="left:18.30px;top:245.67px;font-size:12.2px;line-height:12.2px;color:#000;font-weight:normal;font-family:'Liberation Sans',sans-serif;transform:scaleX(0.9438);transform-origin:0 0;">1.</span>
<span style="left:42.10px;top:245.67px;font-size:12.2px;line-height:12.2px;color:#ff0000;font-weight:normal;font-family:'Liberation Sans',sans-serif;transform:scaleX(0.9667);transform-origin:0 0;">The Bull And The Goat</span>
<span style="left:18.30px;top:267.52px;font-size:12.2px;line-height:12.2px;color:#000;font-weight:normal;font-family:'Liberation Sans',sans-serif;transform:scaleX(0.9438);transform-origin:0 0;">2.</span>
<span style="left:42.10px;top:267.52px;font-size:12.2px;line-height:12.2px;color:#ff0000;font-weight:normal;font-family:'Liberation Sans',sans-serif;transform:scaleX(0.9735);transform-origin:0 0;">The Ants And The Grasshopper</span>
<span style="left:18.30px;top:289.37px;font-size:12.2px;line-height:12.2px;color:#000;font-weight:normal;font-family:'Liberation Sans',sans-serif;transform:scaleX(0.9438);transform-origin:0 0;">3.</span>
<span style="left:42.10px;top:289.37px;font-size:12.2px;line-height:12.2px;color:#ff0000;font-weight:normal;font-family:'Liberation Sans',sans-serif;transform:scaleX(0.9661);transform-origin:0 0;">The Wolf And The House Dog</span>
<span style="left:18.30px;top:311.22px;font-size:12.2px;line-height:12.2px;color:#000;font-weight:normal;font-family:'Liberation Sans',sans-serif;transform:scaleX(0.9438);transform-origin:0 0;">4.</span>
<span style="left:42.10px;top:311.22px;font-size:12.2px;line-height:12.2px;color:#ff0000;font-weight:normal;font-family:'Liberation Sans',sans-serif;transform:scaleX(0.9514);transform-origin:0 0;">The Fox And Grapes</span>
<span style="left:18.30px;top:333.07px;font-size:12.2px;line-height:12.2px;color:#000;font-weight:normal;font-family:'Liberation Sans',sans-serif;transform:scaleX(0.9438);transform-origin:0 0;">5.</span>
<span style="left:42.10px;top:333.07px;font-size:12.2px;line-height:12.2px;color:#ff0000;font-weight:normal;font-family:'Liberation Sans',sans-serif;transform:scaleX(0.9513);transform-origin:0 0;">The Fox And The Crow</span>
<span style="left:18.00px;top:374.26px;font-size:18px;line-height:18px;color:#000;font-weight:normal;font-family:'Liberation Sans',sans-serif;transform:scaleX(0.8817);transform-origin:0 0;">FABLES</span>
<span style="left:18.00px;top:422.91px;font-size:17px;line-height:17px;color:#000;font-weight:normal;font-family:'Liberation Sans',sans-serif;transform:scaleX(0.9199);transform-origin:0 0;">THE BULL AND THE GOAT</span>
<span style="left:18.30px;top:450.84px;font-size:12px;line-height:12px;color:#000;font-weight:normal;font-family:'Liberation Sans',sans-serif;transform:scaleX(1.033);transform-origin:0 0;">A Bull once escaped from a Lion by entering a cave which the Goatherds used to house their flocks in stormy</span>
<span style="left:18.30px;top:465.74px;font-size:12px;line-height:12px;color:#000;font-weight:normal;font-family:'Liberation Sans',sans-serif;transform:scaleX(1.033);transform-origin:0 0;">weather and at night. It happened that one of the Goats had been left behind, and the Bull had no sooner got</span>
<span style="left:18.30px;top:480.64px;font-size:12px;line-height:12px;color:#000;font-weight:normal;font-family:'Liberation Sans',sans-serif;transform:scaleX(1.033);transform-origin:0 0;">inside than this Goat lowered his head and made a rush at him, butting him with his horns. As the Lion was still</span>
<span style="left:18.30px;top:495.54px;font-size:12px;line-height:12px;color:#000;font-weight:normal;font-family:'Liberation Sans',sans-serif;transform:scaleX(1.033);transform-origin:0 0;">prowling outside the entrance to the cave, the Bull had to submit to the insult.</span>
<span style="left:18.30px;top:516.64px;font-size:12px;line-height:12px;color:#000;font-weight:normal;font-family:'Liberation Sans',sans-serif;transform:scaleX(1.033);transform-origin:0 0;">"Do not think," he said, "that I submit to your cowardly treatment because I am afraid of you. When that Lion</span>
<span style="left:18.30px;top:531.74px;font-size:12px;line-height:12px;color:#000;font-weight:normal;font-family:'Liberation Sans',sans-serif;transform:scaleX(1.033);transform-origin:0 0;">leaves, I'll teach you a lesson you won't forget."</span>
<span style="left:18.00px;top:666.61px;font-size:17px;line-height:17px;color:#000;font-weight:normal;font-family:'Liberation Sans',sans-serif;transform:scaleX(0.8982);transform-origin:0 0;">THE ANTS AND THE GRASSHOPPER</span>
<span style="left:18.30px;top:694.14px;font-size:12px;line-height:12px;color:#000;font-weight:normal;font-family:'Liberation Sans',sans-serif;transform:scaleX(1.0431);transform-origin:0 0;">One bright day in late autumn a family of Ants were bustling about in the warm sunshine, drying out the grain</span>
<span style="left:18.30px;top:708.84px;font-size:12px;line-height:12px;color:#000;font-weight:normal;font-family:'Liberation Sans',sans-serif;transform:scaleX(1.0312);transform-origin:0 0;">they had stored up during the summer, when a starving Grasshopper, his fiddle under his arm, came up and</span>
<span style="left:18.30px;top:723.74px;font-size:12px;line-height:12px;color:#000;font-weight:normal;font-family:'Liberation Sans',sans-serif;transform:scaleX(1.033);transform-origin:0 0;">humbly begged for a bite to eat.</span>
<span style="left:18.30px;top:745.64px;font-size:12px;line-height:12px;color:#000;font-weight:normal;font-family:'Liberation Sans',sans-serif;transform:scaleX(1.0466);transform-origin:0 0;">"What!" cried the Ants in surprise, "haven't you stored anything away for the winter? What in the world were</span>
<span style="left:18.30px;top:760.44px;font-size:12px;line-height:12px;color:#000;font-weight:normal;font-family:'Liberation Sans',sans-serif;transform:scaleX(1.033);transform-origin:0 0;">you doing all last summer?"</span>
<span style="left:18.30px;top:781.34px;font-size:12px;line-height:12px;color:#000;font-weight:normal;font-family:'Liberation Sans',sans-serif;transform:scaleX(1.0316);transform-origin:0 0;">"I didn't have time to store up any food," whined the Grasshopper; "I was so busy making music that before I</span>
<div style="left:2px;top:788px;width:876px;height:9px;background:#fff;"></div>
<div style="left:5px;top:788px;width:1px;height:1px;background:#a8aab2;"></div>
<div style="left:876px;top:788px;width:1px;height:1px;background:#a8aab2;"></div>
<div style="left:5px;top:789px;width:872px;height:1px;background:#a8aab2;"></div>
<div style="left:5px;top:790px;width:872px;height:5px;background:#f0f0f0;"></div>
<svg style="left:637px;top:419px;" width="200" height="225" viewBox="0 0 200 225">
<defs>
<linearGradient id="bg_open" x1="0" y1="0" x2="0" y2="1"><stop offset="0" stop-color="#cbcca7"/><stop offset="0.6" stop-color="#c6c8a5"/><stop offset="1" stop-color="#bcbfae"/></linearGradient>
<linearGradient id="bg_ground" x1="0" y1="0" x2="0" y2="1"><stop offset="0" stop-color="#b9bcb1"/><stop offset="1" stop-color="#aaadac"/></linearGradient>
<linearGradient id="bg_rock" x1="0" y1="0" x2="1" y2="0.25"><stop offset="0" stop-color="#3e3b33"/><stop offset="0.35" stop-color="#56504b"/><stop offset="0.65" stop-color="#726569"/><stop offset="1" stop-color="#877980"/></linearGradient>
<filter id="fb" x="-5%" y="-5%" width="110%" height="110%"><feGaussianBlur stdDeviation="0.9"/></filter>
<pattern id="hatch" width="4" height="4" patternUnits="userSpaceOnUse" patternTransform="rotate(-45)"><rect x="0" y="0" width="4" height="1.3" fill="#2a2620"/></pattern>
<clipPath id="rockclip"><path d="M0 0 H200 V225 H200 L196 206 L191 179 L186 160 L182 132 L180 96 L174 55 L159 50 L155 41 L141 26 L125 30 L116 44 L100 34 L93 41 L82 55 L71 66 L55 69 L41 66 L22 64 L0 66 Z"/></clipPath>
</defs>
<rect x="0" y="0" width="200" height="225" fill="url(#bg_open)"/>
<g filter="url(#fb)">
<!-- ground -->
<path d="M0 150 Q60 150 100 162 Q140 168 170 168 L200 175 V225 H0Z" fill="url(#bg_ground)"/>
<path d="M55 140 Q90 146 120 160 L100 163 Q70 156 55 152Z" fill="#9aa290" opacity="0.55"/>
<path d="M27 129 L55 129 L60 150 L55 170 L40 175 L27 160Z" fill="#9ca2a9"/>
<path d="M15 205 Q100 218 200 208 M25 185 Q90 195 160 190" stroke="#8d9397" stroke-width="2" fill="none" opacity="0.45"/>
<!-- rock -->
<path d="M0 0 H200 V225 H200 L196 206 L191 179 L186 160 L182 132 L180 96 L174 55 L159 50 L155 41 L141 26 L125 30 L116 44 L100 34 L93 41 L82 55 L71 66 L55 69 L41 66 L22 64 L0 66 Z" fill="url(#bg_rock)"/>
<path d="M0 0 H40 L30 40 L20 64 L0 66Z" fill="#3b3931" opacity="0.6"/>
<path d="M110 0 H200 V45 L175 35 L150 20Z" fill="#948690" opacity="0.55"/>
<g clip-path="url(#rockclip)"><rect x="0" y="0" width="200" height="225" fill="url(#hatch)" opacity="0.25"/>

<path d="M150 5 L160 30 M165 8 L175 35 M135 8 L142 24 M185 60 L192 120 M190 140 L196 190" stroke="#a898a4" stroke-width="2" opacity="0.5"/></g>
<!-- right wall light streak -->
<path d="M159 50 L174 55 L180 96 L182 132 L176 138 L163 124 L166 82Z" fill="#c5c9d6"/>
<path d="M176 138 L182 132 L186 160 L191 179 L196 206 L200 225 H175 L180 190Z" fill="#958893"/>
<!-- bull -->
<path d="M0 66 L22 64 L41 66 L55 69 L60 66 L72 68 L88 70 L99 76 L99 105 L92 109 L80 110 L69 115 L55 129 L41 143 L34 150 L34 175 L33 190 L26 192 L22 175 L20 160 L18 170 L21 198 L10 199 L8 170 L3 150 L0 148Z" fill="#8b7d5b" stroke="#4e4636" stroke-width="0.9"/>
<path d="M63 72 L88 71 L99 78 L99 104 L86 108 L70 110 L64 95Z" fill="#84775f"/>
<path d="M71 80 Q80 74 86 84 Q84 94 92 100 L80 96 Z" fill="#c0b996" opacity="0.9"/>
<path d="M58 82 Q59 70 72 69 L71 74 Q64 75 62 83Z" fill="#e4e2d6"/>
<path d="M88 71 Q96 66 100 74 L94 74Z" fill="#e4e2d6"/>
<path d="M88 100 L99 99 L99 108 L90 108Z" fill="#c4a49a"/>
<path d="M0 148 L3 150 L4 225 H0Z" fill="#3f4046"/>
<!-- lion -->
<path d="M126 95 L131 82 L141 72 L156 70 L166 78 L166 121 L158 122 L142 117 L132 107Z" fill="#97784a" stroke="#5a4628" stroke-width="0.7"/>
<path d="M126 94 L134 88 L140 98 L136 106 L128 104Z" fill="#b39b6b"/>
<!-- goat -->
<path d="M100 141 L110 131 L127 125 L152 128 L170 138 L184 149 L187 160 L190 176 L197 191 L197 207 L191 204 L186 190 L176 180 L166 170 L150 162 L138 158 L130 162 L134 177 L126 181 L117 167 L108 162 L101 155Z" fill="#877368" stroke="#4a3e38" stroke-width="0.9"/>
<path d="M96 140 Q94 126 99 119 L102 121 Q100 130 103 142Z" fill="#e0ddd2"/>
<path d="M100 141 L108 137 L112 150 L104 152Z" fill="#6e5e58" opacity="0.6"/>
</g>
<rect x="0" y="0" width="200" height="1.5" fill="#2a2a2a"/>
<rect x="0" y="0" width="1.2" height="225" fill="#3a3a3a" opacity="0.7"/>
</svg>
<svg style="left:637px;top:662px;" width="200" height="126" viewBox="0 0 200 126">
<defs><filter id="fg" x="-5%" y="-5%" width="110%" height="110%"><feGaussianBlur stdDeviation="0.6"/></filter>
<linearGradient id="gcl" x1="0" y1="0" x2="1" y2="0"><stop offset="0" stop-color="#d8d5cd"/><stop offset="1" stop-color="#e2dfd8"/></linearGradient></defs>
<rect x="0" y="0" width="200" height="126" fill="url(#gcl)"/>
<g filter="url(#fg)">
<path d="M20 0 H200 V99 L188 94 L174 85 L181 65 L176 47 L160 40 L140 41 L135 27 L124 18 L108 18 L96 12 L76 9 L60 14 L53 26 L46 19 L35 8 L20 2Z" fill="#eecdb9"/>
<path d="M174 85 L188 94 L200 99 V102 L185 98Z" fill="#e8dcc0" opacity="0.7"/>
<!-- grasshopper body -->
<path d="M34 126 L46 104 L58 86 L70 70 L80 70 L78 88 L64 108 L52 126Z" fill="#6c8a8c"/>
<path d="M49 126 L60 100 L72 78 L82 82 L78 104 L67 126Z" fill="#c2ab72"/>
<path d="M52 120 L74 84 M55 114 L76 90 M58 108 L78 96" stroke="#8a7440" stroke-width="0.8"/>
<path d="M29 103 L64 72 L71 78 L35 108Z" fill="#b3a26a"/>
<path d="M30 104 L40 124" stroke="#8a7a50" stroke-width="1.4"/>
<path d="M76 42 L92 44 L95 60 L88 64 L78 59Z" fill="#7c9a90"/>
<path d="M76 42 L86 40 L92 44 L84 50Z" fill="#4a6aa0"/>
<circle cx="81" cy="49" r="2.5" fill="#222"/><circle cx="90" cy="47" r="2" fill="#222"/>
<path d="M51 62 L70 50 L86 60 L87 84 L78 86 L70 70 L51 68Z" fill="#c84a3c"/>
<!-- violin -->
<path d="M66 112 L74 96 L92 82 L106 64 L110 67 L100 84 L88 102 L76 116Z" fill="#ad894a"/>
<path d="M94 82 L126 77" stroke="#555" stroke-width="1.3"/>
<path d="M84 42 L95 26 M90 40 Q104 36 113 40" stroke="#333" stroke-width="0.9" fill="none"/>
<!-- ants (ink sketches) -->
<g stroke="#1e1e1e" stroke-width="1.1" fill="none">
<path d="M135 124 Q138 112 144 104 Q150 98 154 104 Q152 114 146 122 M140 108 L132 100 M148 100 L152 92 M142 116 L134 120 M146 112 L156 116"/>
<path d="M160 124 Q164 114 172 110 Q178 112 176 120 M166 112 L160 104 M172 110 L178 102 M170 118 L182 124"/>
<path d="M186 124 Q186 110 192 100 Q198 96 200 104 M190 104 L184 96 M194 98 L198 90"/>
</g>
<path d="M140 124 L146 106 L152 106 L148 124Z M164 124 L170 114 L176 118 L172 124Z M188 124 L192 104 L200 106 V124Z" fill="#6a6a66" opacity="0.45"/>
<path d="M8 123 L40 118 L80 121 L118 120 V126 H8Z" fill="#6f7c88" opacity="0.55"/>
</g>
</svg>
<div style="left:219px;top:238px;width:411px;height:430px;background:#f0f0f0;border:1px solid #bf9468;box-shadow:0 4px 18px rgba(0,0,0,0.28);"></div>
<div style="left:220px;top:239px;width:409px;height:25px;background:#fff;"></div>
<span style="left:223.70px;top:244.84px;font-size:12px;line-height:12px;color:#000;font-weight:normal;font-family:'Liberation Sans',sans-serif;">Bookmark</span>
<svg style="left:609px;top:246px;" width="10" height="10" viewBox="0 0 10 10"><path d="M0.5 0.5 L9.5 9.5 M9.5 0.5 L0.5 9.5" stroke="#111" stroke-width="1.1"/></svg>
<span style="left:230.80px;top:274.99px;font-size:11px;line-height:11px;color:#000;font-weight:normal;font-family:'Liberation Sans',sans-serif;transform:scaleX(0.9380);transform-origin:0 0;">Bookmark name:</span>
<div style="left:231px;top:285px;width:7px;height:1px;background:#000;"></div>
<div style="left:230px;top:292px;width:260px;height:21px;background:#fff;border:1px solid #0078d7;"></div>
<div style="left:233px;top:295px;width:31px;height:13px;background:#3399ff;"></div>
<span style="left:233.50px;top:296.19px;font-size:11px;line-height:11px;color:#fff;font-weight:normal;font-family:'Liberation Sans',sans-serif;transform:scaleX(0.9672);transform-origin:0 0;">fable1</span>
<div style="left:263px;top:295px;width:1px;height:13px;background:#ff7700;"></div>
<div style="left:230px;top:314px;width:260px;height:341px;background:#fff;border:1px solid #828790;"></div>
<div style="left:232px;top:315px;width:256px;height:13px;background:#3399ff;"></div>
<span style="left:233.50px;top:316.99px;font-size:11px;line-height:11px;color:#fff;font-weight:normal;font-family:'Liberation Sans',sans-serif;">fable1</span>
<span style="left:233.50px;top:329.99px;font-size:11px;line-height:11px;color:#000;font-weight:normal;font-family:'Liberation Sans',sans-serif;">fable2</span>
<span style="left:233.50px;top:342.99px;font-size:11px;line-height:11px;color:#000;font-weight:normal;font-family:'Liberation Sans',sans-serif;">fable3</span>
<span style="left:233.50px;top:355.99px;font-size:11px;line-height:11px;color:#000;font-weight:normal;font-family:'Liberation Sans',sans-serif;">fable4</span>
<span style="left:233.50px;top:368.99px;font-size:11px;line-height:11px;color:#000;font-weight:normal;font-family:'Liberation Sans',sans-serif;">fable5</span>
<div style="left:500px;top:293px;width:118px;height:23px;background:#e1e1e1;border:2px solid #0078d7;"></div>
<span style="left:549.00px;top:298.84px;font-size:12px;line-height:12px;color:#000;font-weight:normal;font-family:'Liberation Sans',sans-serif;transform:scaleX(0.9364);transform-origin:0 0;">Add</span>
<div style="left:500px;top:323px;width:118px;height:23px;background:#e1e1e1;border:1px solid #adadad;"></div>
<span style="left:543.00px;top:328.84px;font-size:12px;line-height:12px;color:#000;font-weight:normal;font-family:'Liberation Sans',sans-serif;transform:scaleX(0.9225);transform-origin:0 0;">Delete</span>
<div style="left:500px;top:352px;width:118px;height:23px;background:#e1e1e1;border:1px solid #adadad;"></div>
<span style="left:545.00px;top:357.84px;font-size:12px;line-height:12px;color:#000;font-weight:normal;font-family:'Liberation Sans',sans-serif;transform:scaleX(0.9537);transform-origin:0 0;">Go to</span>
<div style="left:500px;top:633px;width:118px;height:23px;background:#e1e1e1;border:1px solid #adadad;"></div>
<span style="left:542.50px;top:638.84px;font-size:12px;line-height:12px;color:#000;font-weight:normal;font-family:'Liberation Sans',sans-serif;transform:scaleX(0.8833);transform-origin:0 0;">Cancel</span>
<div style="left:499px;top:390px;width:120px;height:70px;border:1px solid #dcdcdc;"></div>
<div style="left:506px;top:384px;width:44px;height:12px;background:#f0f0f0;"></div>
<span style="left:509.30px;top:384.84px;font-size:12px;line-height:12px;color:#000;font-weight:normal;font-family:'Liberation Sans',sans-serif;transform:scaleX(0.9470);transform-origin:0 0;">Sort by</span>
<svg style="left:507px;top:406px;" width="14" height="14" viewBox="0 0 14 14"><circle cx="6.5" cy="6.5" r="6" fill="#fff" stroke="#333"/><circle cx="6.5" cy="6.5" r="3.5" fill="#333"/></svg>
<svg style="left:507px;top:435px;" width="14" height="14" viewBox="0 0 14 14"><circle cx="6.5" cy="6.5" r="6" fill="#fff" stroke="#333"/></svg>
<span style="left:525.30px;top:406.84px;font-size:12px;line-height:12px;color:#000;font-weight:normal;font-family:'Liberation Sans',sans-serif;transform:scaleX(0.8658);transform-origin:0 0;">name</span>
<span style="left:525.30px;top:435.84px;font-size:12px;line-height:12px;color:#000;font-weight:normal;font-family:'Liberation Sans',sans-serif;transform:scaleX(0.9184);transform-origin:0 0;">location</span>
</body></html>
